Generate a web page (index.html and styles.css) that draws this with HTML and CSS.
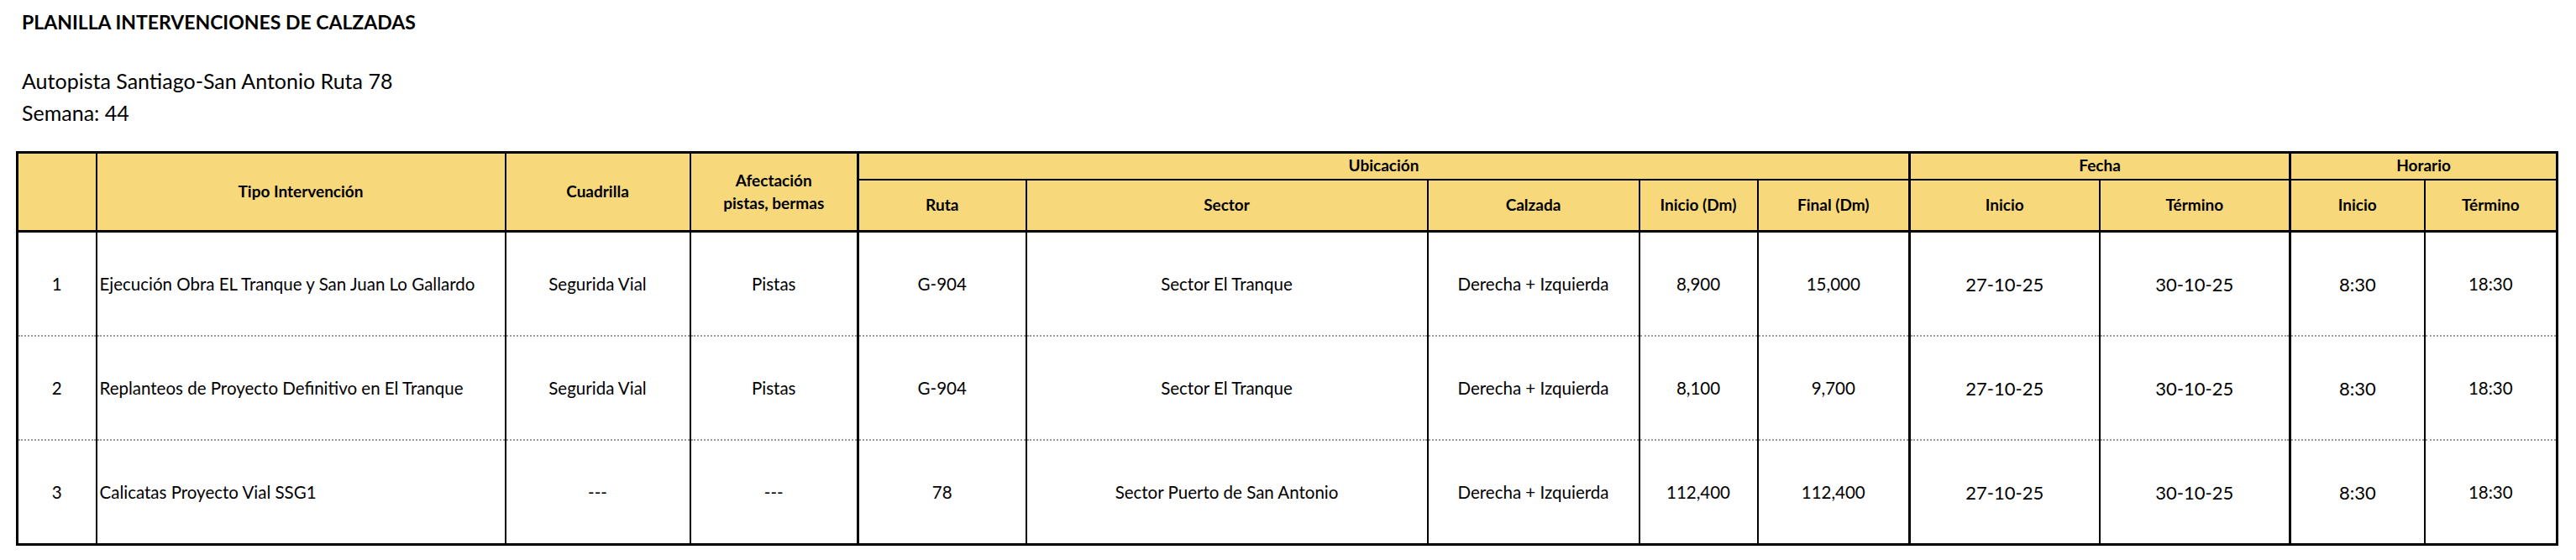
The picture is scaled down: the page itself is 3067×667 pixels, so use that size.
FILE: index.html
```html
<!DOCTYPE html>
<html lang="es">
<head>
<meta charset="utf-8">
<title>Planilla Intervenciones de Calzadas</title>
<link rel="stylesheet" href="styles.css">
</head>
<body>
<div class="head">
  <div class="title">PLANILLA INTERVENCIONES DE CALZADAS</div>
  <div class="sub sub-first">Autopista Santiago-San Antonio Ruta 78</div>
  <div class="sub">Semana: 44</div>
</div>
<table class="grid">
  <colgroup>
    <col class="c-n"><col class="c-tipo"><col class="c-cuad"><col class="c-afec">
    <col class="c-ruta"><col class="c-sector"><col class="c-calz"><col class="c-ini"><col class="c-fin">
    <col class="c-fi"><col class="c-ft"><col class="c-hi"><col class="c-ht">
  </colgroup>
  <thead>
    <tr class="h1">
      <th rowspan="2"></th>
      <th rowspan="2">Tipo Intervención</th>
      <th rowspan="2">Cuadrilla</th>
      <th rowspan="2" class="two">Afectación<br>pistas, bermas</th>
      <th colspan="5" class="grp">Ubicación</th>
      <th colspan="2" class="grp2">Fecha</th>
      <th colspan="2" class="grp2">Horario</th>
    </tr>
    <tr class="h2">
      <th class="grp">Ruta</th>
      <th>Sector</th>
      <th>Calzada</th>
      <th>Inicio (Dm)</th>
      <th>Final (Dm)</th>
      <th class="grp2">Inicio</th>
      <th>Término</th>
      <th class="grp2">Inicio</th>
      <th>Término</th>
    </tr>
  </thead>
  <tbody>
    <tr>
      <td>1</td>
      <td class="left">Ejecución Obra EL Tranque y San Juan Lo Gallardo</td>
      <td>Segurida Vial</td>
      <td>Pistas</td>
      <td class="grp">G-904</td>
      <td>Sector El Tranque</td>
      <td>Derecha + Izquierda</td>
      <td>8,900</td>
      <td>15,000</td>
      <td class="grp2 big">27-10-25</td>
      <td class="big">30-10-25</td>
      <td class="grp2 big">8:30</td>
      <td>18:30</td>
    </tr>
    <tr>
      <td>2</td>
      <td class="left">Replanteos de Proyecto Definitivo en El Tranque</td>
      <td>Segurida Vial</td>
      <td>Pistas</td>
      <td class="grp">G-904</td>
      <td>Sector El Tranque</td>
      <td>Derecha + Izquierda</td>
      <td>8,100</td>
      <td>9,700</td>
      <td class="grp2 big">27-10-25</td>
      <td class="big">30-10-25</td>
      <td class="grp2 big">8:30</td>
      <td>18:30</td>
    </tr>
    <tr>
      <td>3</td>
      <td class="left">Calicatas Proyecto Vial SSG1</td>
      <td>---</td>
      <td>---</td>
      <td class="grp">78</td>
      <td>Sector Puerto de San Antonio</td>
      <td>Derecha + Izquierda</td>
      <td>112,400</td>
      <td>112,400</td>
      <td class="grp2 big">27-10-25</td>
      <td class="big">30-10-25</td>
      <td class="grp2 big">8:30</td>
      <td>18:30</td>
    </tr>
  </tbody>
</table>
</body>
</html>
```

FILE: styles.css
```css
html, body {
  margin: 0;
  padding: 0;
  background: #ffffff;
}

body {
  font-family: Lato, "Open Sans", sans-serif;
  color: #000000;
}

.head {
  padding: 8px 0 0 26px;
}

.title {
  font-weight: 700;
  font-size: 23px;
  line-height: 36px;
}

.sub {
  font-size: 25px;
  line-height: 38px;
}

.sub-first {
  margin-top: 33px;
}

.grid {
  margin: 27px 0 0 19px;
  width: 3024px;
  table-layout: fixed;
  border-collapse: collapse;
  border: 3px solid #000;
}

.c-n { width: 94px; }
.c-tipo { width: 487px; }
.c-cuad { width: 220px; }
.c-afec { width: 200px; }
.c-ruta { width: 200px; }
.c-sector { width: 478px; }
.c-calz { width: 252px; }
.c-ini { width: 141px; }
.c-fin { width: 181px; }
.c-fi { width: 226px; }
.c-ft { width: 227px; }
.c-hi { width: 160px; }
.c-ht { width: 158px; }

.grid th {
  background: #f7d97b;
  font-weight: 700;
  font-size: 19px;
  text-align: center;
  vertical-align: middle;
  border: 2px solid #000;
  padding: 0;
  line-height: 1.4;
}

.grid .h1 {
  height: 32px;
}

.grid .h2 {
  height: 62px;
}

.grid .h2 th {
  border-bottom: 3px solid #000;
}

.grid thead .h1 th[rowspan] {
  border-bottom: 3px solid #000;
}

.grid td {
  font-size: 20.5px;
  text-align: center;
  vertical-align: middle;
  padding: 0;
  height: 122px;
  border-left: 2px solid #000;
  border-right: 2px solid #000;
  border-top: 2px dotted #9a9a9a;
  border-bottom: 2px dotted #9a9a9a;
}

.grid td.left {
  text-align: left;
  padding-left: 3px;
}

.grid td.big {
  font-size: 22px;
}

.grid .grp {
  border-left: 3px solid #000;
}

.grid .grp2 {
  border-left: 3px solid #000;
}
```
